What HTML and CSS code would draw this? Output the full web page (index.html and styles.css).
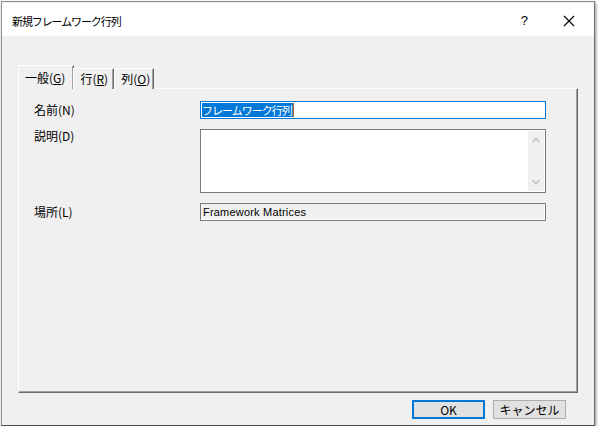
FILE: index.html
```html
<!DOCTYPE html>
<html lang="ja">
<head>
    <meta charset="UTF-8">
    <title>新規フレームワーク行列</title>
    <link rel="stylesheet" href="styles.css">
</head>
<body>
    <div class="window">
        <div class="titlebar">
            <span class="title">新規フレームワーク行列</span>
            <span class="help">?</span>
            <svg class="close" width="12" height="12" viewBox="0 0 12 12">
                <path d="M1 1 L11 11 M11 1 L1 11" stroke="#000" stroke-width="1.1" fill="none"/>
            </svg>
        </div>

        <div class="content">
            <div class="tabs">
                <div class="tab active">一般(<u>G</u>)</div>
                <div class="tab">行(<u>R</u>)</div>
                <div class="tab">列(<u>O</u>)</div>
            </div>

            <div class="panel">
                <div class="form">
                    <label class="lbl">名前(N)</label>
                    <div class="field name-field">
                        <span class="sel">フレームワーク行列</span><span class="caret"></span>
                    </div>

                    <label class="lbl lbl-top">説明(D)</label>
                    <div class="field memo">
                        <div class="scroll">
                            <svg width="16" height="60" viewBox="0 0 16 60">
                                <path d="M4.5 11 L8 7.5 L11.5 11" stroke="#c2c2c2" stroke-width="1.6" fill="none"/>
                                <path d="M4.5 49 L8 52.5 L11.5 49" stroke="#c2c2c2" stroke-width="1.6" fill="none"/>
                            </svg>
                        </div>
                    </div>

                    <label class="lbl">場所(L)</label>
                    <div class="field readonly">Framework Matrices</div>
                </div>
            </div>

            <div class="buttons">
                <button type="button" class="btn default">OK</button>
                <button type="button" class="btn">キャンセル</button>
            </div>
        </div>
    </div>
</body>
</html>
```

FILE: styles.css
```css
body {
    margin: 0;
    background: #ffffff;
    font-family: "Noto Sans CJK JP", "Liberation Sans", sans-serif;
    font-size: 12px;
    color: #000;
}
.window {
    margin: 1px 0 0 1px;
    width: 592px;
    height: 423px;
    border: 1px solid #8c8c8c;
    border-right-color: #6e6e6e;
    border-bottom-color: #4a4a4a;
    background: #f0f0f0;
    box-shadow: 1px 2px 3px rgba(0, 0, 0, 0.45);
    display: flex;
    flex-direction: column;
}
.titlebar {
    flex-shrink: 0;
    height: 33px;
    margin-top: 1px;
    background: #ffffff;
    display: flex;
    align-items: center;
    padding-left: 10px;
}
.title {
    font-size: 11px;
    letter-spacing: -1.1px;
    flex: 1;
    padding-top: 2px;
}
.help {
    font-family: "Liberation Sans", sans-serif;
    font-size: 13px;
    margin-right: 35px;
    padding-top: 2px;
}
.close {
    margin-right: 19px;
    margin-top: 2px;
}
.content {
    flex: 1;
    padding: 29px 16px 0 16px;
    display: flex;
    flex-direction: column;
}
.tabs {
    flex-shrink: 0;
    display: flex;
    align-items: flex-end;
    padding-left: 2px;
    height: 24px;
    position: relative;
    z-index: 1;
    margin-bottom: -1px;
}
.tab {
    height: 20px;
    line-height: 20px;
    padding: 0 5px 0 6px;
    border-left: 1px solid #ffffff;
    border-top: 1px solid #ffffff;
    border-right: 1px solid #696969;
    box-shadow: inset -1px 0 #a0a0a0;
    background: #f0f0f0;
}
.tab.active {
    height: 23px;
    line-height: 23px;
    padding: 0 8px 0 6px;
    margin-left: -2px;
    margin-right: -1px;
}
.tab:last-child {
    padding-right: 3px;
}
.tab u {
    text-underline-offset: 1px;
}
.panel {
    flex-shrink: 0;
    box-sizing: border-box;
    height: 305px;
    border-left: 1px solid #ffffff;
    border-top: 1px solid #ffffff;
    border-right: 1px solid #696969;
    border-bottom: 1px solid #696969;
    box-shadow: inset -1px -1px #a0a0a0;
    padding: 12px 30px 0 15px;
}
.form {
    display: grid;
    grid-template-columns: 166px 346px;
    row-gap: 10px;
    align-items: center;
}
.lbl {
    line-height: 18px;
}
.lbl-top {
    align-self: start;
    margin-top: -2px;
}
.field {
    height: 18px;
    box-sizing: border-box;
    border: 1px solid #7a7a7a;
    background: #ffffff;
}
.name-field {
    border-color: #0078d7;
    padding: 1px;
    display: flex;
    align-items: center;
}
.sel {
    background: #0078d7;
    color: #ffffff;
    font-size: 11px;
    letter-spacing: -1px;
    line-height: 14px;
    padding-right: 1px;
}
.caret {
    width: 1px;
    height: 14px;
    background: #b06a2a;
}
.memo {
    height: 64px;
    padding: 1px;
    display: flex;
    justify-content: flex-end;
}
.scroll {
    width: 16px;
    background: #f0f0f0;
}
.scroll svg {
    display: block;
}
.readonly {
    background: #f0f0f0;
    box-shadow: inset -1px -1px #ffffff;
    font-family: "Liberation Sans", sans-serif;
    font-size: 11px;
    letter-spacing: 0.2px;
    line-height: 16px;
    padding-left: 2px;
}
.buttons {
    flex-shrink: 0;
    display: flex;
    justify-content: flex-end;
    gap: 8px;
    margin-top: 7px;
    padding-right: 12px;
}
.btn {
    width: 73px;
    height: 19px;
    box-sizing: border-box;
    background: #e1e1e1;
    border: 1px solid #adadad;
    font-family: "Noto Sans CJK JP", "Liberation Sans", sans-serif;
    font-size: 12px;
    line-height: 15px;
    padding: 0;
    color: #000;
}
.btn.default {
    border: 2px solid #0078d7;
}
```
